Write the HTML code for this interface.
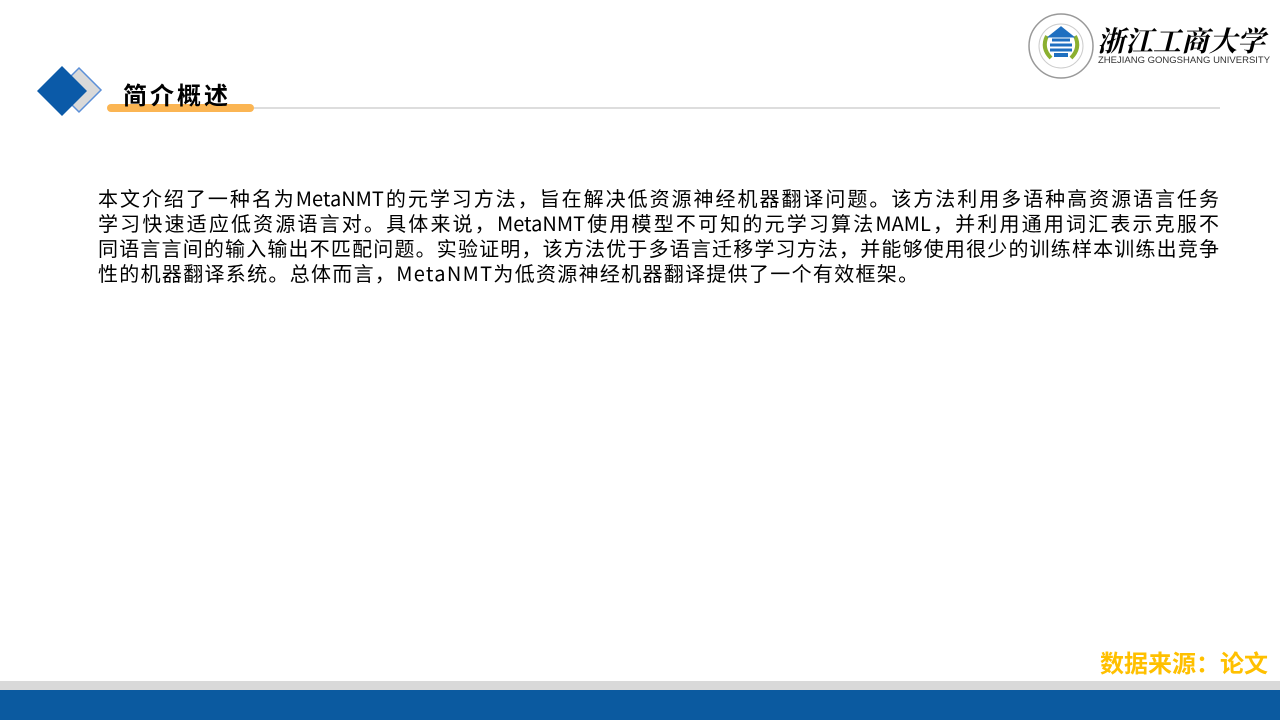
<!DOCTYPE html>
<html><head><meta charset="utf-8"><style>
body{margin:0;width:1280px;height:720px;position:relative;background:#fff;overflow:hidden;font-family:"Liberation Sans","Noto Sans CJK SC",sans-serif}
.t{position:absolute;left:98px;top:185px;width:1121px;font-size:20px;line-height:25px;color:#000;font-family:"Noto Sans CJK SC",sans-serif;white-space:nowrap}
.t div{text-align:justify;text-align-last:justify;height:25px}
.t div.l{text-align-last:left;letter-spacing:1.3px}
</style></head><body>
<svg style="position:absolute;left:0;top:0" width="1280" height="720">
<line x1="250" y1="108" x2="1220" y2="108" stroke="#bbb" stroke-width="1"/>
<polygon points="79,68 101,90 79,112 57,90" fill="#d9d9d9" stroke="#5b8fd8" stroke-width="1.5"/>
<polygon points="62,66 87,91 62,116 37,91" fill="#0b5aa8"/>
<rect x="107" y="104" width="147" height="8" rx="4" fill="#fbb553"/>
<circle cx="1061" cy="46" r="32" fill="#fff" stroke="#999" stroke-width="1.5"/>
<circle cx="1061" cy="46" r="22" fill="none" stroke="#ccc" stroke-width="1"/>
<path d="M1047 36 q-6 12 4 22 M1075 36 q6 12 -4 22" stroke="#8bb030" stroke-width="4" fill="none"/>
<path d="M1061 28 l-10 8 h20z M1052 40 h18 M1050 45 h22 M1050 50 h22" stroke="#1e6fc0" stroke-width="3" fill="#1e6fc0"/>
<rect x="1054" y="53" width="14" height="4" fill="#1e6fc0"/>
</svg>
<div style="position:absolute;left:123px;top:76px;font-size:24px;font-weight:bold;letter-spacing:3px">简介概述</div>
<div style="position:absolute;left:1097px;top:22px;font-size:28px;line-height:36px;font-family:'Noto Serif CJK SC',serif;font-weight:bold;font-style:italic;white-space:nowrap">浙江工商大学</div>
<div style="position:absolute;left:1098px;top:55px;font-size:9.5px;color:#333;white-space:nowrap">ZHEJIANG GONGSHANG UNIVERSITY</div>
<div class="t"><div>本文介绍了一种名为MetaNMT的元学习方法，旨在解决低资源神经机器翻译问题。该方法利用多语种高资源语言任务</div><div>学习快速适应低资源语言对。具体来说，MetaNMT使用模型不可知的元学习算法MAML，并利用通用词汇表示克服不</div><div>同语言言间的输入输出不匹配问题。实验证明，该方法优于多语言迁移学习方法，并能够使用很少的训练样本训练出竞争</div><div class="l">性的机器翻译系统。总体而言，MetaNMT为低资源神经机器翻译提供了一个有效框架。</div></div>
<div style="position:absolute;right:12px;top:644px;font-size:24px;font-weight:bold;color:#ffc000">数据来源：论文</div>
<div style="position:absolute;left:0;top:681px;width:1280px;height:9px;background:#d9d9d9"></div>
<div style="position:absolute;left:0;top:690px;width:1280px;height:30px;background:#0b5aa0"></div>
</body></html>
